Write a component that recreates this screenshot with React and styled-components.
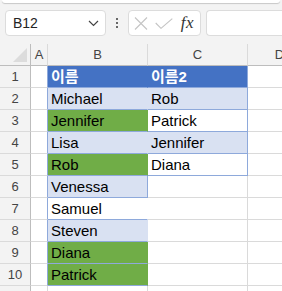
import React from "react";
import styled, { createGlobalStyle } from "styled-components";

const Global = createGlobalStyle`
  html, body { margin: 0; padding: 0; background: #f3f3f3; overflow: hidden; }
  body { font-family: "Liberation Sans", "Noto Sans CJK KR", sans-serif; }
  * { box-sizing: border-box; }
`;

const Page = styled.div`
  width: 282px;
  height: 291px;
  overflow: hidden;
  background: #f3f3f3;
`;

const TopStrip = styled.div`
  height: 3px;
  margin: 0 2px;
  background: #fff;
  border-radius: 0 0 4px 4px;
  box-shadow: 0 1px 1px rgba(0, 0, 0, 0.18);
`;

const Toolbar = styled.div`
  height: 41px;
  display: flex;
  align-items: flex-start;
  padding: 7px 0 0 5px;
  gap: 0;
`;

const Box = styled.div`
  height: 26px;
  background: #fff;
  border: 1px solid #dcdcdc;
  border-radius: 4px;
  display: flex;
  align-items: center;
`;

const NameBox = styled(Box)`
  width: 101px;
  padding: 0 6px 0 7px;
  justify-content: space-between;
  font-size: 14px;
  color: #242424;
`;

const Dots = styled.div`
  width: 22px;
  height: 26px;
  display: flex;
  flex-direction: column;
  align-items: center;
  justify-content: center;
  gap: 2px;
  span {
    width: 2px;
    height: 2px;
    border-radius: 1px;
    background: #3a3a3a;
  }
`;

const FxBox = styled(Box)`
  width: 73px;
  padding: 0 5px 0 5px;
  justify-content: space-between;
`;

const Fx = styled.span`
  font-family: "Liberation Serif", serif;
  font-style: italic;
  font-size: 17px;
  color: #333;
  letter-spacing: 0.5px;
  padding-right: 1px;
`;

const FormulaInput = styled(Box)`
  flex: 1;
  margin-left: 5px;
  border-right: none;
  border-radius: 4px 0 0 4px;
`;

const Grid = styled.div`
  display: grid;
  grid-template-columns: 31px 17px 100px 100px 64px;
  grid-auto-rows: 22px;
`;

const HeadCell = styled.div`
  background: #f3f3f3;
  border-right: 1px solid ${(p) => p.$rb || "#dadada"};
  border-bottom: 1px solid #bdbdbd;
  display: flex;
  align-items: center;
  justify-content: center;
  font-size: 13px;
  color: #444;
  position: relative;
`;

const Corner = styled(HeadCell)`
  border-right-color: #bdbdbd;
`;

const Triangle = styled.div`
  position: absolute;
  right: 3px;
  bottom: 3px;
  width: 0;
  height: 0;
  border-left: 14px solid transparent;
  border-bottom: 14px solid #dcdcdc;
`;

const RowNum = styled.div`
  background: #f3f3f3;
  border-right: 1px solid #bdbdbd;
  border-bottom: 1px solid #dadada;
  display: flex;
  align-items: center;
  justify-content: center;
  font-size: 13px;
  color: #444;
`;

const Cell = styled.div`
  background: ${(p) => p.$fill || "#fff"};
  border-right: 1px solid ${(p) => p.$rb || "#dadada"};
  border-bottom: 1px solid ${(p) => p.$bb || "#dadada"};
  padding-left: 3px;
  font-size: 15px;
  line-height: 21px;
  white-space: nowrap;
  overflow: hidden;
  color: ${(p) => p.$color || "#000"};
  font-weight: ${(p) => (p.$bold ? 700 : 400)};
`;

const STY = {
  head: { fill: "#4472C4", color: "#fff", bold: true },
  band: { fill: "#D9E1F2" },
  green: { fill: "#70AD47" },
  white: { fill: "#fff" },
};

const TB = "#8EA9DB";

const colB = [
  ["이름", "head"],
  ["Michael", "band"],
  ["Jennifer", "green"],
  ["Lisa", "band"],
  ["Rob", "green"],
  ["Venessa", "band"],
  ["Samuel", "white"],
  ["Steven", "band"],
  ["Diana", "green"],
  ["Patrick", "green"],
];

const colC = [
  ["이름2", "head"],
  ["Rob", "band"],
  ["Patrick", "white"],
  ["Jennifer", "band"],
  ["Diana", "white"],
];

function Chevron() {
  return (
    <svg width="11" height="7" viewBox="0 0 11 7">
      <path d="M1 1 L5.5 5.5 L10 1" fill="none" stroke="#444" strokeWidth="1.2" />
    </svg>
  );
}

function Cross() {
  return (
    <svg width="14" height="13" viewBox="0 0 14 13">
      <path d="M1 0.5 L13 12.5 M13 0.5 L1 12.5" stroke="#c4c4c4" strokeWidth="1.1" fill="none" />
    </svg>
  );
}

function Check() {
  return (
    <svg width="18" height="11" viewBox="0 0 18 11">
      <path d="M0.7 5 L6 10.3 L17.3 0.6" stroke="#c4c4c4" strokeWidth="1.1" fill="none" />
    </svg>
  );
}

export default function App() {
  const rows = [];
  for (let i = 0; i < 11; i++) {
    const b = colB[i];
    const c = colC[i];
    const bs = b ? STY[b[1]] : null;
    const cs = c ? STY[c[1]] : null;
    rows.push(
      <React.Fragment key={i}>
        <RowNum>{i + 1}</RowNum>
        <Cell $rb={b ? TB : undefined} />
        {b ? (
          <Cell
            $fill={bs.fill}
            $color={bs.color}
            $bold={bs.bold}
            $bb={TB}
            $rb={i === 5 ? TB : bs.fill}
          >
            {b[0]}
          </Cell>
        ) : (
          <Cell />
        )}
        {c ? (
          <Cell $fill={cs.fill} $color={cs.color} $bold={cs.bold} $bb={TB} $rb={TB}>
            {c[0]}
          </Cell>
        ) : (
          <Cell />
        )}
        <Cell />
      </React.Fragment>
    );
  }

  return (
    <Page>
      <Global />
      <TopStrip />
      <Toolbar>
        <NameBox>
          <span>B12</span>
          <Chevron />
        </NameBox>
        <Dots>
          <span />
          <span />
          <span />
        </Dots>
        <FxBox>
          <Cross />
          <Check />
          <Fx>fx</Fx>
        </FxBox>
        <FormulaInput />
      </Toolbar>
      <Grid>
        <Corner>
          <Triangle />
        </Corner>
        <HeadCell>A</HeadCell>
        <HeadCell>B</HeadCell>
        <HeadCell>C</HeadCell>
        <HeadCell>D</HeadCell>
        {rows}
      </Grid>
    </Page>
  );
}
